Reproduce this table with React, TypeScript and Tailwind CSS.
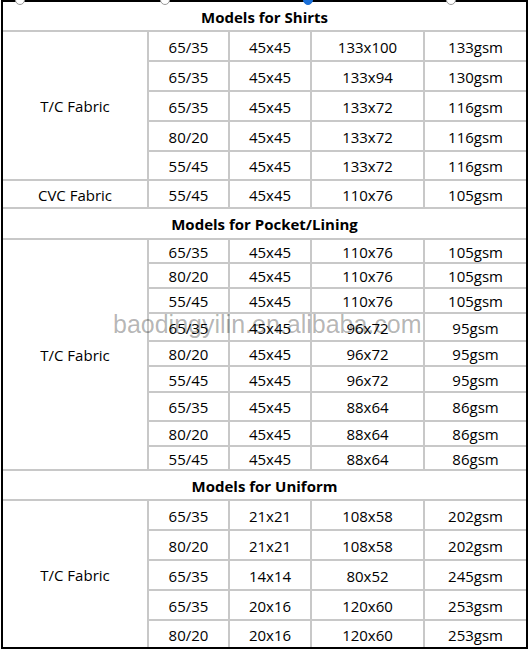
// Fabric models spec sheet
import { Fragment } from "react";

const font = { fontFamily: '"Open Sans", "Noto Sans", Arial, sans-serif' };

type Row = { h: string; blend: string; yarn: string; density: string; weight: string };

type Group = { title: string; titleH: string; blocks: { label: string; rows: Row[] }[] };

const groups: Group[] = [
  {
    title: "Models for Shirts",
    titleH: "h-[29px]",
    blocks: [
      {
        label: "T/C Fabric",
        rows: [
          { h: "h-[30px]", blend: "65/35", yarn: "45x45", density: "133x100", weight: "133gsm" },
          { h: "h-[30px]", blend: "65/35", yarn: "45x45", density: "133x94", weight: "130gsm" },
          { h: "h-[30px]", blend: "65/35", yarn: "45x45", density: "133x72", weight: "116gsm" },
          { h: "h-[30px]", blend: "80/20", yarn: "45x45", density: "133x72", weight: "116gsm" },
          { h: "h-[29px]", blend: "55/45", yarn: "45x45", density: "133x72", weight: "116gsm" },
        ],
      },
      {
        label: "CVC Fabric",
        rows: [{ h: "h-[28px]", blend: "55/45", yarn: "45x45", density: "110x76", weight: "105gsm" }],
      },
    ],
  },
  {
    title: "Models for Pocket/Lining",
    titleH: "h-[31px]",
    blocks: [
      {
        label: "T/C Fabric",
        rows: [
          { h: "h-[24px]", blend: "65/35", yarn: "45x45", density: "110x76", weight: "105gsm" },
          { h: "h-[25px]", blend: "80/20", yarn: "45x45", density: "110x76", weight: "105gsm" },
          { h: "h-[25px]", blend: "55/45", yarn: "45x45", density: "110x76", weight: "105gsm" },
          { h: "h-[28px]", blend: "65/35", yarn: "45x45", density: "96x72", weight: "95gsm" },
          { h: "h-[25px]", blend: "80/20", yarn: "45x45", density: "96x72", weight: "95gsm" },
          { h: "h-[26px]", blend: "55/45", yarn: "45x45", density: "96x72", weight: "95gsm" },
          { h: "h-[29px]", blend: "65/35", yarn: "45x45", density: "88x64", weight: "86gsm" },
          { h: "h-[25px]", blend: "80/20", yarn: "45x45", density: "88x64", weight: "86gsm" },
          { h: "h-[24px]", blend: "55/45", yarn: "45x45", density: "88x64", weight: "86gsm" },
        ],
      },
    ],
  },
  {
    title: "Models for Uniform",
    titleH: "h-[30px]",
    blocks: [
      {
        label: "T/C Fabric",
        rows: [
          { h: "h-[30px]", blend: "65/35", yarn: "21x21", density: "108x58", weight: "202gsm" },
          { h: "h-[30px]", blend: "80/20", yarn: "21x21", density: "108x58", weight: "202gsm" },
          { h: "h-[30px]", blend: "65/35", yarn: "14x14", density: "80x52", weight: "245gsm" },
          { h: "h-[30px]", blend: "65/35", yarn: "20x16", density: "120x60", weight: "253gsm" },
          { h: "h-[27px]", blend: "80/20", yarn: "20x16", density: "120x60", weight: "253gsm" },
        ],
      },
    ],
  },
];

const cell = "border-2 border-[#c8c8c8] p-0 pt-[2px] text-center align-middle";

export default function App() {
  return (
    <div className="relative w-[530px] h-[650px] bg-white text-black text-[15px]" style={font}>
      <div className="ml-[1px] w-[527px] border-2 border-black">
        <table className="w-full table-fixed border-collapse border-hidden leading-none">
          <colgroup>
            <col className="w-[145px]" />
            <col className="w-[81px]" />
            <col className="w-[82px]" />
            <col className="w-[113px]" />
            <col className="w-[102px]" />
          </colgroup>
          <tbody>
            {groups.map((g) => (
              <Fragment key={g.title}>
                <tr className={g.titleH}>
                  <td colSpan={5} className={`${cell} font-bold`}>{g.title}</td>
                </tr>
                {g.blocks.map((b) =>
                  b.rows.map((r, i) => (
                    <tr key={`${g.title}-${b.label}-${i}`} className={r.h}>
                      {i === 0 && (
                        <td rowSpan={b.rows.length} className={cell}>{b.label}</td>
                      )}
                      <td className={cell}>{r.blend}</td>
                      <td className={cell}>{r.yarn}</td>
                      <td className={cell}>{r.density}</td>
                      <td className={cell}>{r.weight}</td>
                    </tr>
                  ))
                )}
              </Fragment>
            ))}
          </tbody>
        </table>
      </div>

      {/* watermark */}
      <div
        className="absolute left-[113px] top-[312px] text-[25px] leading-[25px] text-black/30 pointer-events-none whitespace-nowrap"
        style={{ fontFamily: '"Liberation Sans", Arial, sans-serif' }}
      >
        baodingyilin.en.alibaba.com
      </div>

      {/* editor handles on top edge */}
      <span className="absolute left-[15px] top-[-5px] w-[10px] h-[10px] rounded-full bg-white border border-[#9a9a9a]" />
      <span className="absolute left-[160px] top-[-5px] w-[10px] h-[10px] rounded-full bg-white border border-[#9a9a9a]" />
      <span className="absolute left-[303px] top-[-5px] w-[10px] h-[10px] rounded-full bg-[#1a6fd8] border border-[#1a6fd8]" />
      <span className="absolute left-[446px] top-[-5px] w-[10px] h-[10px] rounded-full bg-white border border-[#9a9a9a]" />
    </div>
  );
}
